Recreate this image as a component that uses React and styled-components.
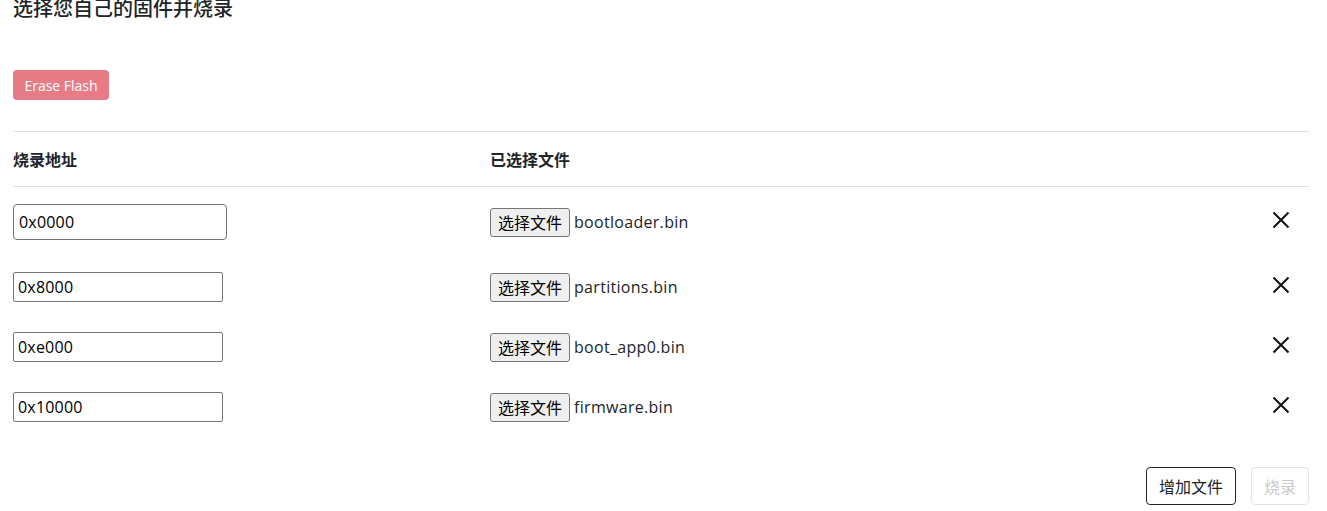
import React from 'react';
import styled, { createGlobalStyle } from 'styled-components';

const GlobalStyle = createGlobalStyle`
  body {
    margin: 0;
    background: #fff;
    color: #212529;
    font-family: "Open Sans", "Noto Sans CJK SC", sans-serif;
  }
`;

const Page = styled.div`
  padding: 0 18px 0 13px;
`;

const Title = styled.h2`
  margin: -3px 0 0;
  font-size: 20px;
  font-weight: 500;
  line-height: 24px;
`;

const EraseButton = styled.button`
  display: block;
  margin-top: 49px;
  width: 96px;
  height: 30px;
  padding: 0 8px;
  border: none;
  border-radius: 4px;
  background: #e87c86;
  color: #fff;
  font: inherit;
  font-size: 14px;
`;

const Table = styled.div`
  margin-top: 31px;
  border-top: 1px solid #dee2e6;
`;

const Row = styled.div`
  display: grid;
  grid-template-columns: 477px 1fr 56px;
  align-items: center;
  padding: ${p => (p.$first ? '17px 0' : '15px 0')};
`;

const HeadRow = styled(Row)`
  height: 54px;
  padding: 0;
  border-bottom: 1px solid #dee2e6;
  font-size: 16px;
  font-weight: 700;
`;

const AddressInput = styled.input`
  box-sizing: border-box;
  width: ${p => (p.$first ? '214px' : '210px')};
  height: ${p => (p.$first ? '36px' : '30px')};
  padding: 0 ${p => (p.$first ? '5px' : '4px')};
  border: 1px solid ${p => (p.$first ? '#6c757d' : '#767676')};
  border-radius: ${p => (p.$first ? '4px' : '2px')};
  font: inherit;
  font-size: 16px;
  letter-spacing: 0.2px;
  color: #000;
  outline: none;
`;

const FileCell = styled.div`
  display: flex;
  align-items: center;
  gap: 4px;
  font-size: 16px;
  letter-spacing: 0.3px;
`;

const FileButton = styled.span`
  box-sizing: border-box;
  display: inline-flex;
  align-items: center;
  height: 29px;
  padding: 0 7px;
  border: 1px solid #767676;
  border-radius: 3px;
  background: #efefef;
  color: #000;
  font-size: 16px;
  letter-spacing: 0;
`;

const RemoveButton = styled.button`
  display: flex;
  justify-content: center;
  padding: 0;
  margin-bottom: 5px;
  border: none;
  background: none;
  cursor: pointer;
`;

const Footer = styled.div`
  display: flex;
  justify-content: flex-end;
  gap: 15px;
  margin-top: 30px;
`;

const ActionButton = styled.button`
  box-sizing: border-box;
  height: 38px;
  padding: 0 12px;
  border: 1px solid ${p => (p.disabled ? '#e2e3e5' : '#212529')};
  border-radius: 4px;
  background: #fff;
  color: ${p => (p.disabled ? '#c8c9cb' : '#212529')};
  font: inherit;
  font-size: 16px;
`;

const CloseIcon = () => (
  <svg width="18" height="18" viewBox="0 0 18 18">
    <path d="M1.5 1.5L16.5 16.5M16.5 1.5L1.5 16.5" stroke="#111" strokeWidth="2" />
  </svg>
);

const files = [
  { address: '0x0000', name: 'bootloader.bin' },
  { address: '0x8000', name: 'partitions.bin' },
  { address: '0xe000', name: 'boot_app0.bin' },
  { address: '0x10000', name: 'firmware.bin' },
];

export default function App() {
  return (
    <>
      <GlobalStyle />
      <Page>
        <Title>选择您自己的固件并烧录</Title>
        <EraseButton disabled>Erase Flash</EraseButton>
        <Table>
          <HeadRow>
            <div>烧录地址</div>
            <div>已选择文件</div>
            <div />
          </HeadRow>
          {files.map((f, i) => (
            <Row key={f.address} $first={i === 0}>
              <div>
                <AddressInput $first={i === 0} defaultValue={f.address} />
              </div>
              <FileCell>
                <FileButton>选择文件</FileButton>
                <span>{f.name}</span>
              </FileCell>
              <RemoveButton aria-label="remove">
                <CloseIcon />
              </RemoveButton>
            </Row>
          ))}
        </Table>
        <Footer>
          <ActionButton>增加文件</ActionButton>
          <ActionButton disabled>烧录</ActionButton>
        </Footer>
      </Page>
    </>
  );
}
